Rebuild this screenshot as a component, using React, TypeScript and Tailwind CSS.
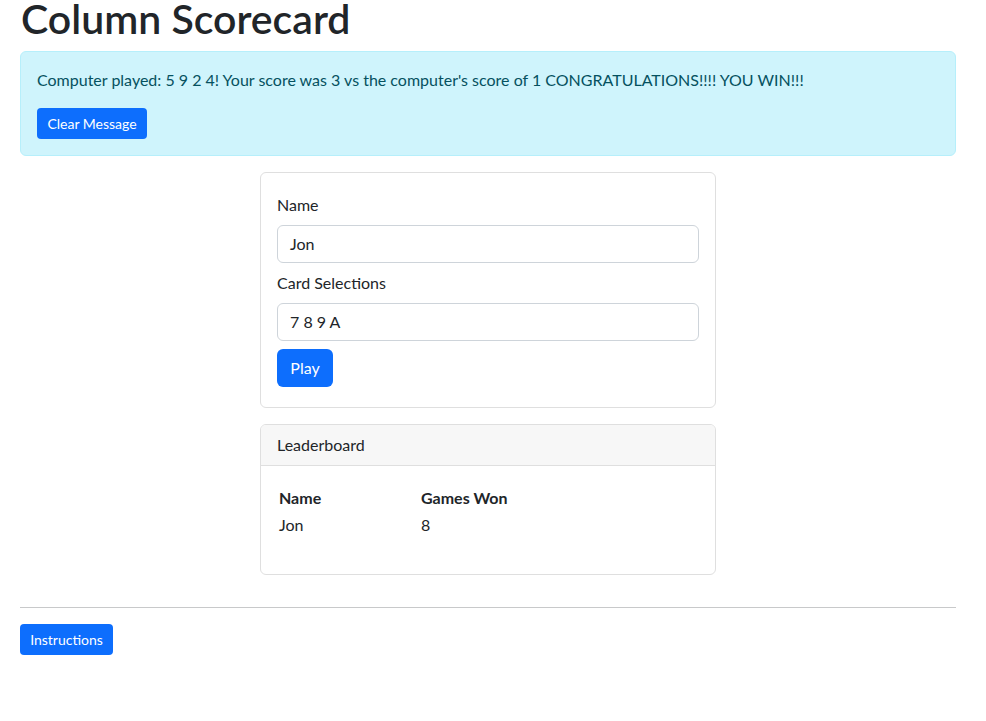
export default function App() {
  return (
    <div
      className="min-h-[721px] bg-white text-[#212529] text-[16px] leading-[24px]"
      style={{ fontFamily: "Lato, 'Noto Sans', sans-serif" }}
    >
      <div className="pl-[20px] w-[956px]">
        <h1 className="text-[41px] font-semibold leading-[37px] mb-[14px] pl-[1px]">Column Scorecard</h1>

        <div className="rounded-[6px] border border-[#b6effb] bg-[#cff4fc] text-[#055160] p-[16px]">
          <p className="mb-[16px]">
            Computer played: 5 9 2 4! Your score was 3 vs the computer's score of 1 CONGRATULATIONS!!!! YOU WIN!!!
          </p>
          <button className="h-[31px] w-[110px] rounded-[4px] bg-[#0d6efd] text-white text-[14px] leading-[21px]">
            Clear Message
          </button>
        </div>

        <div className="flex flex-col items-center mt-[16px]">
          <div className="w-[456px] rounded-[6px] border border-[#dfdfdf] px-[16px] py-[20px]">
            <label className="block mb-[8px]">Name</label>
            <div className="h-[38px] rounded-[6px] border border-[#ced4da] px-[12px] flex items-center mb-[8px]">
              Jon
            </div>
            <label className="block mb-[8px]">Card Selections</label>
            <div className="h-[38px] rounded-[6px] border border-[#ced4da] px-[12px] flex items-center mb-[8px]">
              7 8 9 A
            </div>
            <button className="h-[38px] w-[56px] rounded-[6px] bg-[#0d6efd] text-white">Play</button>
          </div>

          <div className="w-[456px] mt-[16px] rounded-[6px] border border-[#dfdfdf] overflow-hidden">
            <div className="bg-[#f7f7f7] border-b border-[#dfdfdf] px-[16px] py-[8px]">Leaderboard</div>
            <div className="px-[16px] pt-[20px] pb-[35px]">
              <div className="flex h-[27px] font-bold">
                <div className="w-[142px] pl-[2px]">Name</div>
                <div className="pl-[2px]">Games Won</div>
              </div>
              <div className="flex h-[26px]">
                <div className="w-[142px] pl-[2px]">Jon</div>
                <div className="pl-[2px]">8</div>
              </div>
            </div>
          </div>
        </div>

        <div className="mt-[32px] h-px bg-[#c8c9ca]" />
        <button className="mt-[16px] h-[31px] w-[93px] rounded-[4px] bg-[#0d6efd] text-white text-[14px] leading-[21px]">
          Instructions
        </button>
      </div>
    </div>
  );
}
